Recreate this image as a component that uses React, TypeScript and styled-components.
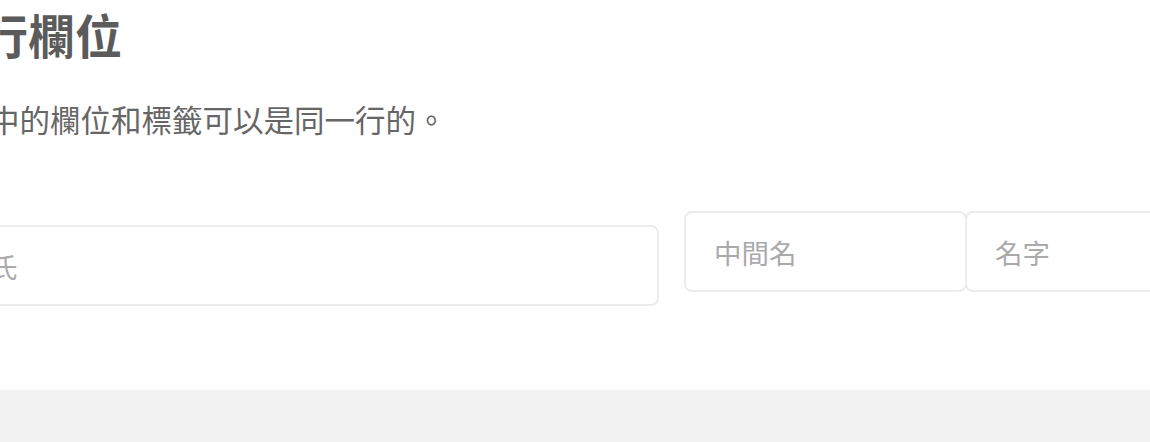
import { createGlobalStyle } from "styled-components";
import styled from "styled-components";

const GlobalStyle = createGlobalStyle`
  html, body {
    margin: 0;
    padding: 0;
    background: #ffffff;
  }
  body {
    font-family: "Noto Sans CJK TC", "Noto Sans", sans-serif;
    overflow: hidden;
  }
`;

const Page = styled.div`
  width: 1150px;
  height: 442px;
  display: flex;
  flex-direction: column;
  overflow: hidden;
`;

const Content = styled.section`
  height: 390px;
  flex-shrink: 0;
  margin-left: -40px;
  background: #ffffff;
`;

const Title = styled.h2`
  margin: 0;
  padding: 3px 0 0 21px;
  font-size: 47px;
  line-height: 62px;
  font-weight: 700;
  color: #5b5b5b;
  white-space: nowrap;
`;

const Description = styled.p`
  margin: 34px 0 0;
  padding-left: 29px;
  font-size: 30.5px;
  line-height: 40px;
  color: #666666;
  white-space: nowrap;
`;

const FieldRow = styled.div`
  display: flex;
  align-items: flex-start;
  gap: 25px;
  margin-top: 72px;
`;

const Group = styled.div`
  display: flex;
  flex-shrink: 0;
`;

const Field = styled.input<{ $width: number; $offset?: number; $join?: boolean }>`
  box-sizing: border-box;
  flex-shrink: 0;
  width: ${(p) => p.$width}px;
  height: 81px;
  margin-top: ${(p) => p.$offset ?? 0}px;
  margin-left: ${(p) => (p.$join ? "-2px" : "0")};
  padding: 0 28px;
  border: 2px solid #ececec;
  border-radius: 8px;
  background: #ffffff;
  font-family: "Noto Sans CJK TC", "Noto Sans", sans-serif;
  font-size: 27.5px;
  color: #555555;
  outline: none;

  &::placeholder {
    color: #aaaaaa;
  }
`;

const Footer = styled.footer`
  flex: 1;
  background: #f2f2f2;
`;

export default function App() {
  return (
    <>
      <GlobalStyle />
      <Page>
        <Content>
          <Title>行欄位</Title>
          <Description>中的欄位和標籤可以是同一行的。</Description>
          <FieldRow>
            <Field $width={699} $offset={14} placeholder="氏" />
            <Group>
              <Field $width={283} placeholder="中間名" />
              <Field $width={300} $join placeholder="名字" />
            </Group>
          </FieldRow>
        </Content>
        <Footer />
      </Page>
    </>
  );
}
